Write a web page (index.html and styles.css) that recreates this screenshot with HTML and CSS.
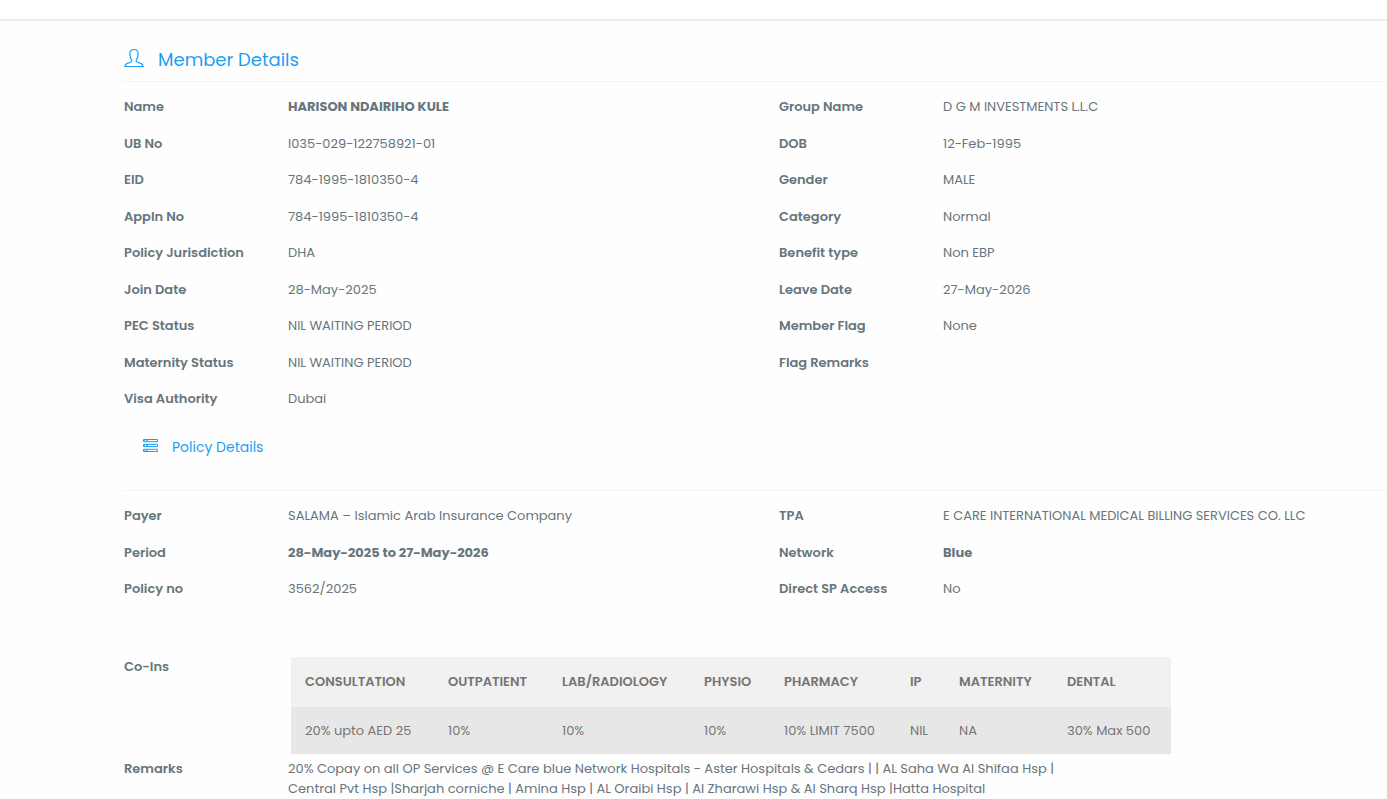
FILE: index.html
```html
<!DOCTYPE html>
<html lang="en">
<head>
<meta charset="utf-8">
<title>Member Details</title>
<link rel="stylesheet" href="styles.css">
</head>
<body>
<header class="topbar"></header>
<main class="page">
  <section class="section">
    <h1 class="title">
      <svg class="title-icon" viewBox="0 0 20 20" width="20" height="20" aria-hidden="true"><path d="M7.700 12.200C6.600 10.800 5.900 8.200 5.900 5.800C5.900 3 7.400 1.500 10 1.500s4.100 1.500 4.100 4.300c0 2.400-.7 5-1.800 6.400c-.5 1 .1 1.700 1.200 2.100l3.200 1.100c1.500.5 2.300 1.600 2.500 3.100H.8c.2-1.500 1-2.600 2.500-3.100l3.200-1.100c1.100-.4 1.700-1.100 1.200-2.100z"/></svg>
      Member Details
    </h1>
    <div class="columns">
      <dl class="fields">
        <div class="field"><dt>Name</dt><dd class="strong">HARISON NDAIRIHO KULE</dd></div>
        <div class="field"><dt>UB No</dt><dd>I035-029-122758921-01</dd></div>
        <div class="field"><dt>EID</dt><dd>784-1995-1810350-4</dd></div>
        <div class="field"><dt>Appln No</dt><dd>784-1995-1810350-4</dd></div>
        <div class="field"><dt>Policy Jurisdiction</dt><dd>DHA</dd></div>
        <div class="field"><dt>Join Date</dt><dd>28-May-2025</dd></div>
        <div class="field"><dt>PEC Status</dt><dd>NIL WAITING PERIOD</dd></div>
        <div class="field"><dt>Maternity Status</dt><dd>NIL WAITING PERIOD</dd></div>
        <div class="field"><dt>Visa Authority</dt><dd>Dubai</dd></div>
      </dl>
      <dl class="fields">
        <div class="field"><dt>Group Name</dt><dd>D G M INVESTMENTS L.L.C</dd></div>
        <div class="field"><dt>DOB</dt><dd>12-Feb-1995</dd></div>
        <div class="field"><dt>Gender</dt><dd>MALE</dd></div>
        <div class="field"><dt>Category</dt><dd>Normal</dd></div>
        <div class="field"><dt>Benefit type</dt><dd>Non EBP</dd></div>
        <div class="field"><dt>Leave Date</dt><dd>27-May-2026</dd></div>
        <div class="field"><dt>Member Flag</dt><dd>None</dd></div>
        <div class="field"><dt>Flag Remarks</dt><dd></dd></div>
      </dl>
    </div>
  </section>

  <section class="section">
    <h2 class="subtitle">
      <svg class="subtitle-icon" viewBox="0 0 15 13" width="15" height="13" aria-hidden="true"><path d="M.5 .5h14v2.200H.5zM.5 5.400h14v2.200H.5zM.5 10.300h14v2.200H.5z"/><path class="ports" d="M1 1.500h1M3 1.500h2M1 6.500h1M3 6.500h2M1 11.500h1M3 11.500h2"/></svg>
      Policy Details
    </h2>
    <div class="columns">
      <dl class="fields">
        <div class="field"><dt>Payer</dt><dd>SALAMA – Islamic Arab Insurance Company</dd></div>
        <div class="field"><dt>Period</dt><dd class="strong">28-May-2025 to 27-May-2026</dd></div>
        <div class="field"><dt>Policy no</dt><dd>3562/2025</dd></div>
      </dl>
      <dl class="fields">
        <div class="field"><dt>TPA</dt><dd>E CARE INTERNATIONAL MEDICAL BILLING SERVICES CO. LLC</dd></div>
        <div class="field"><dt>Network</dt><dd class="strong">Blue</dd></div>
        <div class="field"><dt>Direct SP Access</dt><dd>No</dd></div>
      </dl>
    </div>
    <div class="coins">
      <h3 class="label" id="coins-label">Co-Ins</h3>
      <table class="benefits" aria-labelledby="coins-label">
        <colgroup><col class="c-consult"><col class="c-out"><col class="c-lab"><col class="c-physio"><col class="c-pharm"><col class="c-ip"><col class="c-mat"><col class="c-dental"></colgroup>
        <thead><tr><th>CONSULTATION</th><th>OUTPATIENT</th><th>LAB/RADIOLOGY</th><th>PHYSIO</th><th>PHARMACY</th><th>IP</th><th>MATERNITY</th><th>DENTAL</th></tr></thead>
        <tbody><tr><td>20% upto AED 25</td><td>10%</td><td>10%</td><td>10%</td><td>10% LIMIT 7500</td><td>NIL</td><td>NA</td><td>30% Max 500</td></tr></tbody>
      </table>
    </div>
    <div class="remarks">
      <h3 class="label">Remarks</h3>
      <p class="text">20% Copay on all OP Services @ E Care blue Network Hospitals - Aster Hospitals &amp; Cedars | | AL Saha Wa Al Shifaa Hsp |<br>Central Pvt Hsp |Sharjah corniche | Amina Hsp | AL Oraibi Hsp | Al Zharawi Hsp &amp; Al Sharq Hsp |Hatta Hospital</p>
    </div>
  </section>
</main>
</body>
</html>
```

FILE: styles.css
```css
* { box-sizing: border-box; }

body {
  margin: 0;
  background: #fefefe;
  color: #67757c;
  font: 400 13px/20px Poppins, Inter, sans-serif;
}

h1, h2, h3, p, dl, dd { margin: 0; }

.topbar {
  height: 20px;
  background: #fff;
  border-bottom: 1px solid #e9e9e9;
  box-shadow: 0 1px 1px #f3f3f3;
}

.page { padding-left: 124px; }

.title,
.subtitle {
  display: flex;
  align-items: center;
  color: #1e9ff2;
  font-weight: 400;
  border-bottom: 1px solid #f2f2f2;
}

.title {
  gap: 14px;
  padding: 28px 0 9px;
  font-size: 18px;
  line-height: 24px;
}

.subtitle {
  gap: 14px;
  padding: 11px 0 33px 19px;
  font-size: 14px;
  line-height: 20px;
}

.title-icon,
.subtitle-icon {
  flex: none;
  fill: none;
  stroke: currentColor;
  margin-bottom: 3px;
}

.title-icon { stroke-width: 1.2; margin-bottom: 4px; }
.ports { stroke-opacity: 0.8; }

.columns {
  display: grid;
  grid-template-columns: minmax(0, 655fr) minmax(0, 608fr);
  padding-top: 15px;
}

.field {
  display: grid;
  grid-template-columns: 164px minmax(0, 1fr);
  padding-bottom: 16px;
}

.field:nth-child(odd) { padding-bottom: 17px; }

dt,
.label {
  font-size: 13px;
  font-weight: 600;
}

.strong { font-weight: 700; }

.coins {
  display: grid;
  grid-template-columns: 167px minmax(0, 880px);
  padding-top: 41px;
}

.benefits {
  width: 100%;
  table-layout: fixed;
  border-collapse: collapse;
  color: #757575;
  white-space: nowrap;
}

.benefits th,
.benefits td {
  padding: 14px 0 13px 14px;
  text-align: left;
}

.benefits th {
  padding: 15px 0 15px 14px;
  font-weight: 600;
}

.benefits thead { background: #f1f1f1; }
.benefits tbody { background: #e7e7e7; }

.c-consult { width: 143px; }
.c-out { width: 114px; }
.c-lab { width: 142px; }
.c-physio { width: 80px; }
.c-pharm { width: 126px; }
.c-ip { width: 49px; }
.c-mat { width: 108px; }
.c-dental { width: 118px; }

.remarks {
  display: grid;
  grid-template-columns: 164px minmax(0, 1fr);
  padding-top: 5px;
}
```
